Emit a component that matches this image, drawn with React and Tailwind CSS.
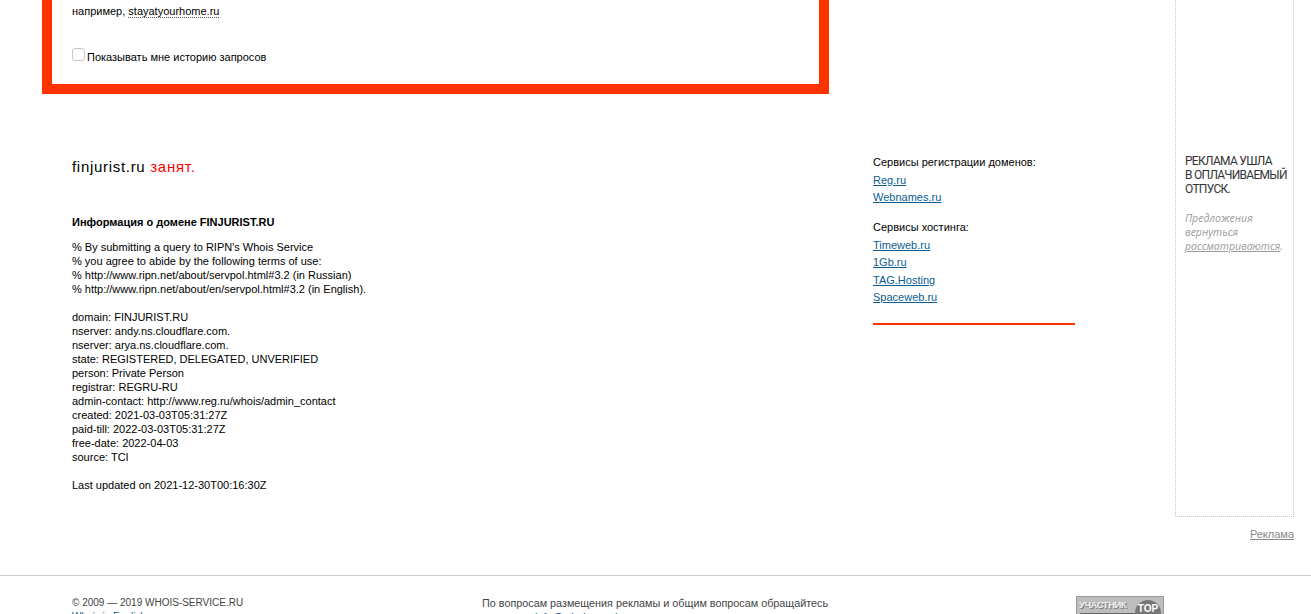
import React from 'react';

const whoisHeader = [
    "% By submitting a query to RIPN's Whois Service",
    '% you agree to abide by the following terms of use:',
    '% http://www.ripn.net/about/servpol.html#3.2 (in Russian)',
    '% http://www.ripn.net/about/en/servpol.html#3.2 (in English).',
];

const whoisData = [
    'domain: FINJURIST.RU',
    'nserver: andy.ns.cloudflare.com.',
    'nserver: arya.ns.cloudflare.com.',
    'state: REGISTERED, DELEGATED, UNVERIFIED',
    'person: Private Person',
    'registrar: REGRU-RU',
    'admin-contact: http://www.reg.ru/whois/admin_contact',
    'created: 2021-03-03T05:31:27Z',
    'paid-till: 2022-03-03T05:31:27Z',
    'free-date: 2022-04-03',
    'source: TCI',
];

const registrars = ['Reg.ru', 'Webnames.ru'];
const hosting = ['Timeweb.ru', '1Gb.ru', 'TAG.Hosting', 'Spaceweb.ru'];

const App = () => {
    return (
        <div className="bg-white text-black text-[11px] leading-[14px] font-['Liberation_Sans',Arial,sans-serif] min-h-[614px] overflow-hidden">
            {/* top area */}
            <div className="flex">
                <div className="w-[1175px] pl-[42px]">
                    {/* search box (scrolled) */}
                    <div className="w-[787px] border-x-[10px] border-b-[10px] border-[#ff3300] pl-[20px] pt-[4px] pb-[23px]">
                        <div>
                            например,{' '}
                            <span className="border-b border-dotted border-[#555]">stayatyourhome.ru</span>
                        </div>
                        <label className="mt-[30px] flex items-center h-[13px]">
                            <span className="w-[13px] h-[13px] rounded-[3px] border border-[#c8c8c8] bg-white" />
                            <span className="ml-[2px] mt-[5px]">Показывать мне историю запросов</span>
                        </label>
                    </div>

                    <div className="flex">
                        {/* whois result */}
                        <div className="w-[831px] pl-[30px] pt-[64px]">
                            <div className="text-[15px] leading-[18px] tracking-[0.7px]">
                                finjurist.ru <span className="text-[#ff0000]">занят.</span>
                            </div>
                            <div className="mt-[39px] font-bold">Информация о домене FINJURIST.RU</div>
                            <div className="mt-[11px]">
                                {whoisHeader.map((l) => (
                                    <div key={l}>{l}</div>
                                ))}
                            </div>
                            <div className="mt-[14px]">
                                {whoisData.map((l) => (
                                    <div key={l}>{l}</div>
                                ))}
                            </div>
                            <div className="mt-[14px]">Last updated on 2021-12-30T00:16:30Z</div>
                        </div>

                        {/* services */}
                        <div className="w-[202px] pt-[60px] leading-[17.5px]">
                            <div>Сервисы регистрации доменов:</div>
                            {registrars.map((r) => (
                                <div key={r}>
                                    <a className="text-[#0b5d91] underline">{r}</a>
                                </div>
                            ))}
                            <div className="mt-[12.5px]">Сервисы хостинга:</div>
                            {hosting.map((h) => (
                                <div key={h}>
                                    <a className="text-[#0b5d91] underline">{h}</a>
                                </div>
                            ))}
                            <div className="mt-[16px] h-[2px] bg-[#ff3300]" />
                        </div>
                    </div>
                </div>

                {/* ad column */}
                <div className="w-[119px] flex flex-col">
                    <div className="h-[517px] border-x border-b border-dotted border-[#c4c4c4] pl-[9px] pt-[154px]">
                        <div className="text-[12px] leading-[14px] text-[#333] font-['Roboto',sans-serif] tracking-[-0.7px] whitespace-nowrap">
                            РЕКЛАМА УШЛА
                            <br />В ОПЛАЧИВАЕМЫЙ
                            <br />
                            ОТПУСК.
                        </div>
                        <div className="mt-[15px] italic text-[#9a9a9a] font-['Open_Sans',sans-serif] text-[10.5px] leading-[14px]">
                            Предложения
                            <br />
                            вернуться
                            <br />
                            <span className="underline">рассматриваются</span>.
                        </div>
                    </div>
                    <div className="mt-[10px] text-right text-[#888] leading-[14px]">
                        <a className="underline">Реклама</a>
                    </div>
                </div>
            </div>

            {/* footer */}
            <div className="mt-[34px] border-t border-[#cfcfcf] pt-[20px] flex text-[#444]">
                <div className="w-[410px] ml-[72px] text-[10px]">
                    <div>© 2009 — 2019 WHOIS-SERVICE.RU</div>
                    <a className="text-[#0b5d91] underline">Whois in English</a>
                </div>
                <div className="w-[594px] text-[10.8px]">
                    <div>По вопросам размещения рекламы и общим вопросам обращайтесь</div>
                    <div>
                        по адресу <a className="text-[#0b5d91] underline">info@whois-service.ru</a>
                    </div>
                </div>
                <div className="w-[88px] h-[31px] border border-[#9a9a9a] bg-[#bdbdbd] relative overflow-hidden">
                    <div className="absolute left-[2px] top-[2px] text-[9.5px] leading-[12px] font-bold text-[#f2f2f2] tracking-[-0.5px] [text-shadow:1px_1px_0_#777]">
                        УЧАСТНИК
                    </div>
                    <div className="absolute right-[2px] top-[3px] w-[26px] h-[26px] rounded-full bg-[#777] text-white text-[10px] font-bold text-center leading-[18px]">
                        TOP
                    </div>
                    <div className="absolute left-[3px] top-[16px] w-[55px] h-[4px] bg-[#666]" />
                </div>
            </div>
        </div>
    );
};

export default App;
